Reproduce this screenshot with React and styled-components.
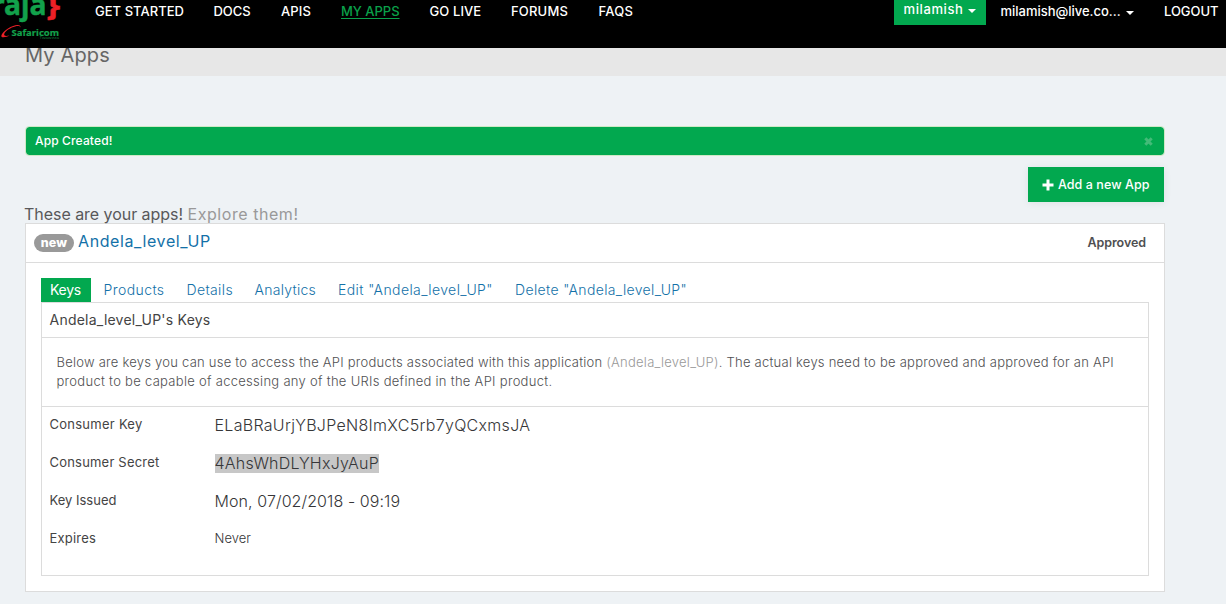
import React from 'react';
import styled, { createGlobalStyle } from 'styled-components';

const green = '#02a84f';
const line = '#dcdcdc';

const GlobalStyle = createGlobalStyle`
  * { box-sizing: border-box; }
  html, body { height: 604px; overflow: hidden; }
  body {
    margin: 0;
    background: #eef2f5;
    color: #4f4f51;
    font-family: Inter, 'Liberation Sans', sans-serif;
    font-size: 13px;
  }
`;

const Tracked = styled.span`
  letter-spacing: ${p => p.$ls || 0}px;
  white-space: nowrap;
`;

const Navbar = styled.header`
  display: flex;
  align-items: flex-start;
  height: 48px;
  background: #000;
  color: #fff;
  font-weight: 500;
  line-height: 18px;
`;

const Brand = styled.svg`
  display: block;
  width: 80px;
  height: 44px;
  flex: none;
`;

const NavLinks = styled.nav`
  display: flex;
  flex: 1;
  padding-top: 2px;
`;

const NavLink = styled.a`
  width: ${p => p.$w}px;
  padding-left: 15px;
  white-space: nowrap;
  letter-spacing: ${p => p.$ls}px;
  color: ${p => (p.$active ? '#0aa04a' : '#fff')};
  text-decoration: ${p => (p.$active ? 'underline' : 'none')};
  text-underline-offset: 2px;
`;

const TeamButton = styled.button`
  display: flex;
  align-items: center;
  justify-content: space-between;
  width: 92px;
  height: 25px;
  padding: 0 10px 7px;
  border: 0;
  background: ${green};
  color: #fff;
  font: 500 13px Inter, sans-serif;
  line-height: 18px;
`;

const Account = styled.div`
  display: flex;
  align-items: center;
  width: 133px;
  margin-left: 15px;
  padding-top: 2px;
  gap: 5px;
`;

const Caret = styled.i`
  flex: none;
  margin-top: 4px;
  border: 4px solid transparent;
  border-top-color: #fff;
  border-bottom: 0;
`;

const Logout = styled.a`
  margin-left: 30.5px;
  width: 62px;
  padding-top: 2px;
  letter-spacing: -0.04px;
`;

const TitleBar = styled.div`
  height: 28px;
  padding-left: 25px;
  overflow: hidden;
  background: #e7e7e7;
`;

const Title = styled.h1`
  margin: -5px 0 0;
  font-size: 20px;
  font-weight: 400;
  line-height: 25px;
  letter-spacing: 0.15px;
  color: #666;
`;

const Main = styled.main`
  width: 1140px;
  margin-left: 25px;
  padding-top: 50px;
`;

const Alert = styled.div`
  display: flex;
  align-items: center;
  justify-content: space-between;
  height: 30px;
  padding: 0 11px 2px 9px;
  border: 1px solid #cfe9c6;
  border-radius: 4px;
  background: ${green};
  background-clip: padding-box;
  color: #fff;
  font-size: 12px;
  font-weight: 500;
`;

const CloseIcon = styled.svg`
  display: block;
  width: 9px;
  height: 9px;
  margin-top: 2px;
`;

const AddButton = styled.button`
  display: flex;
  align-items: center;
  gap: 4px;
  width: 136px;
  height: 35px;
  margin: 11px 1px 0 auto;
  padding: 0 14px;
  border: 0;
  background: ${green};
  box-shadow: 0 1px 8px rgba(0, 0, 0, 0.07);
  color: #fff;
  font: 500 12.5px Inter, sans-serif;
  letter-spacing: 0.065px;
  white-space: nowrap;
`;

const Intro = styled.h3`
  margin: 3px 0 0 -1px;
  height: 18px;
  font-size: 16px;
  font-weight: 400;
  line-height: 19px;
  color: #58585a;
`;

const Muted = styled(Tracked)`
  color: #999;
`;

const AppCard = styled.section`
  height: 369px;
  border: 1px solid ${line};
  background: #fff;
`;

const CardHeader = styled.div`
  display: flex;
  align-items: center;
  height: 39px;
  padding: 0 18px 0 8px;
  border-bottom: 1px solid ${line};
`;

const Badge = styled.span`
  width: 40px;
  height: 18px;
  border-radius: 9px;
  background: #999;
  color: #fff;
  font-size: 12.5px;
  font-weight: 800;
  line-height: 18px;
  letter-spacing: 0.2px;
  text-align: center;
`;

const AppName = styled.a`
  flex: 1;
  margin: -5px 0 0 4px;
  font-size: 16px;
  letter-spacing: 0.6px;
  color: #1371a8;
`;

const Status = styled.span`
  margin-top: -2px;
  font-size: 12.5px;
  font-weight: 600;
  letter-spacing: -0.07px;
`;

const Tabs = styled.div`
  display: flex;
  height: 24px;
  margin: 15px 0 0 15px;
  font-size: 14px;
  line-height: 24px;
`;

const Tab = styled.a`
  width: ${p => p.$w}px;
  padding-left: ${p => (p.$active ? 9 : 0)}px;
  margin-right: ${p => p.$gap}px;
  white-space: nowrap;
  letter-spacing: ${p => p.$ls}px;
  font-weight: ${p => (p.$active ? 400 : 300)};
  color: ${p => (p.$active ? '#fff' : '#1371a8')};
  background: ${p => (p.$active ? green : 'none')};
`;

const Panel = styled.div`
  height: 274px;
  margin: 0 15px;
  border: 1px solid ${line};
`;

const PanelTitle = styled.div`
  height: 35px;
  padding-left: 7.5px;
  border-bottom: 1px solid ${line};
  font-size: 14px;
  line-height: 34px;
  letter-spacing: 0.23px;
  color: #444;
`;

const Description = styled.p`
  height: 69px;
  margin: 0;
  padding: 15px 0 0 14.5px;
  border-bottom: 1px solid ${line};
  font-weight: 300;
  line-height: 19px;
  color: #505052;
  white-space: nowrap;
`;

const KeyRow = styled.div`
  display: flex;
  align-items: center;
  height: 38px;
  padding: 0 0 2px 7.5px;
`;

const KeyLabel = styled.span`
  width: 165px;
  margin-top: -2px;
  letter-spacing: ${p => p.$ls}px;
  color: #444;
`;

const KeyValue = styled.span`
  background: ${p => (p.$selected ? '#c7c7c7' : 'none')};
  font-size: ${p => (p.$small ? 13 : 16)}px;
  font-weight: 300;
  line-height: 19px;
  letter-spacing: ${p => p.$ls}px;
  margin-top: ${p => (p.$small ? -2 : 0)}px;
  color: #363638;
`;

const links = [
  ['GET STARTED', 118.5, 0.03],
  ['DOCS', 67.5, -0.07],
  ['APIS', 60, 0.1],
  ['MY APPS', 88.5, -0.02],
  ['GO LIVE', 81.5, 0.1],
  ['FORUMS', 87.5, 0.19],
  ['FAQS', 64, 0.25],
];

const tabs = [
  ['Keys', 50, 12.5, -0.25],
  ['Products', 61, 22, 0.42],
  ['Details', 46.5, 21.5, 0.37],
  ['Analytics', 61.5, 22, 0.26],
  ['Edit "Andela_level_UP"', 155, 22, 0.4],
  ['Delete "Andela_level_UP"', 172, 0, 0.35],
];

const keys = [
  { label: 'Consumer Key', ls: 0.26, value: 'ELaBRaUrjYBJPeN8ImXC5rb7yQCxmsJA', vls: 0.3 },
  { label: 'Consumer Secret', ls: 0.2, value: '4AhsWhDLYHxJyAuP', vls: 0.23, selected: true },
  { label: 'Key Issued', ls: 0, value: 'Mon, 07/02/2018 - 09:19', vls: 0.09 },
  { label: 'Expires', ls: 0.2, value: 'Never', vls: 0.05, small: true },
];

function Logo() {
  return (
    <Brand viewBox="0 0 80 44">
      <g fontFamily="'Noto Sans', sans-serif" fontWeight="700">
        <text x="-8" y="15" fontSize="29" textLength="54.500" lengthAdjust="spacingAndGlyphs" fill="#12a14b" stroke="#12a14b" strokeWidth="0.4">raja</text>
        <text x="46.500" y="15" fontSize="27" textLength="13.500" lengthAdjust="spacingAndGlyphs" fill="#ed2027" stroke="#ed2027" strokeWidth="0.6">{'}'}</text>
        <text x="11.500" y="35.500" fontSize="9.600" textLength="47.500" lengthAdjust="spacingAndGlyphs" fill="#12a14b" stroke="#12a14b" strokeWidth="0.2">Safaricom</text>
        <text x="39.500" y="39.300" fontSize="3.400" fontWeight="400" textLength="19.500" lengthAdjust="spacingAndGlyphs" fill="#0d7a39">Twaweza</text>
      </g>
      <path d="M20.500 27.500C21 23.500 14 24.500 8 28.500C2 32.500 -1 37.500 3.500 37.300C5.500 37.200 7.500 36.500 9.500 35.500C6.500 36 3.500 36.500 4.300 33.800C5.500 30.500 11 27.500 15 26.500C18 25.700 20 26 20.500 27.500Z" fill="#ed2027" />
    </Brand>
  );
}

export default function App() {
  return (
    <>
      <GlobalStyle />
      <Navbar>
        <Logo />
        <NavLinks>
          {links.map(([text, w, ls]) => (
            <NavLink key={text} $w={w} $ls={ls} $active={text === 'MY APPS'}>{text}</NavLink>
          ))}
        </NavLinks>
        <TeamButton><Tracked $ls={0.6}>milamish</Tracked><Caret /></TeamButton>
        <Account><Tracked $ls={-0.02}>milamish@live.co...</Tracked><Caret /></Account>
        <Logout>LOGOUT</Logout>
      </Navbar>
      <TitleBar><Title>My Apps</Title></TitleBar>
      <Main>
        <Alert>
          <Tracked $ls={0.14}>App Created!</Tracked>
          <CloseIcon viewBox="0 0 9 9"><path d="M1.300 1.300L7.700 7.700M7.700 1.300L1.300 7.700" stroke="#43bb78" strokeWidth="3" /></CloseIcon>
        </Alert>
        <AddButton>
          <svg width="12" height="12" viewBox="0 0 12 12"><path d="M6 0.500V11.500M0.500 6H11.500" stroke="#fff" strokeWidth="3" /></svg>
          Add a new App
        </AddButton>
        <Intro><Tracked $ls={-0.04}>These are your apps!</Tracked> <Muted $ls={0.55}>Explore them!</Muted></Intro>
        <AppCard>
          <CardHeader>
            <Badge>new</Badge>
            <AppName>Andela_level_UP</AppName>
            <Status>Approved</Status>
          </CardHeader>
          <Tabs>
            {tabs.map(([text, w, gap, ls]) => (
              <Tab key={text} $w={w} $gap={gap} $ls={ls} $active={text === 'Keys'}>{text}</Tab>
            ))}
          </Tabs>
          <Panel>
            <PanelTitle>Andela_level_UP's Keys</PanelTitle>
            <Description>
              <Tracked $ls={0.24}>
                Below are keys you can use to access the API products associated with this application <Muted $ls={0.25}>(Andela_level_UP)</Muted>. The actual keys need to be approved and approved for an API
              </Tracked>
              <br />
              <Tracked $ls={0.29}>product to be capable of accessing any of the URIs defined in the API product.</Tracked>
            </Description>
            {keys.map(k => (
              <KeyRow key={k.label}>
                <KeyLabel $ls={k.ls}>{k.label}</KeyLabel>
                <KeyValue $ls={k.vls} $selected={k.selected} $small={k.small}>{k.value}</KeyValue>
              </KeyRow>
            ))}
          </Panel>
        </AppCard>
      </Main>
    </>
  );
}
